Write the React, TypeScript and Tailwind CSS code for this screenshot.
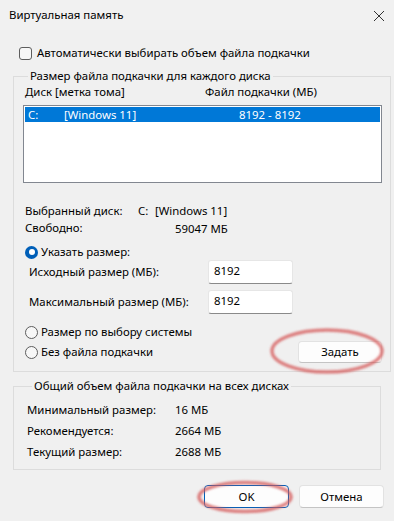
import React from "react";

function Radio({ checked }: { checked?: boolean }) {
  if (checked) {
    return (
      <span className="w-[13px] h-[13px] rounded-full bg-[#005fb8] flex items-center justify-center shrink-0">
        <span className="w-[6px] h-[6px] rounded-full bg-white" />
      </span>
    );
  }
  return <span className="w-[13px] h-[13px] rounded-full border border-[#5d5d5d] bg-[#f7f7f7] shrink-0" />;
}

function Input({ value }: { value: string }) {
  return (
    <div className="w-[85px] h-[24px] bg-white border border-[#e6e6e6] border-b-[#8a8a8a] rounded-[3px] pl-[5px] pt-[2px] leading-[16px]">
      {value}
    </div>
  );
}

export default function App() {
  return (
    <div
      className="relative w-[394px] h-[521px] bg-[#f0f0f0] text-[11.4px] leading-[16px] text-black overflow-hidden"
      style={{ fontFamily: '"Noto Sans", "Open Sans", sans-serif' }}
    >
      {/* title bar */}
      <div className="h-[30px] flex items-center justify-between pl-[9px] pr-[9px] bg-[#f1f1f1]">
        <span>Виртуальная память</span>
        <svg width="12" height="12" viewBox="0 0 12 12" className="mt-[1px]">
          <path d="M1 1 L11 11 M11 1 L1 11" stroke="#333" strokeWidth="1" />
        </svg>
      </div>

      <div className="px-[13px]">
        {/* auto checkbox */}
        <div className="mt-[15px] h-[16px] flex items-center pl-[6px] gap-[5px]">
          <span className="w-[13px] h-[13px] rounded-[3px] border border-[#5d5d5d] bg-[#f7f7f7]" />
          <span>Автоматически выбирать объем файла подкачки</span>
        </div>

        {/* group 1 */}
        <fieldset className="mt-[7px] border border-[#dcdcdc] pb-[8px] pl-[9px] pr-[8px] m-0">
          <legend className="ml-[5px] px-[2px] leading-[16px]">Размер файла подкачки для каждого диска</legend>
          <div className="flex h-[16px] pl-[2px]">
            <span className="w-[180px]">Диск [метка тома]</span>
            <span>Файл подкачки (МБ)</span>
          </div>
          <div className="mt-[5px] w-[359px] h-[78px] bg-white border border-[#828790] p-[1px]">
            <div className="h-[15px] bg-[#0078d7] text-white flex leading-[15px]">
              <span className="w-[39px] pl-[3px]">C:</span>
              <span className="w-[175px]">[Windows 11]</span>
              <span>8192 - 8192</span>
            </div>
          </div>

          <div className="mt-[20px] flex h-[16px] pl-[2px]">
            <span className="w-[113px]">Выбранный диск:</span>
            <span className="w-[17px]">C:</span>
            <span>[Windows 11]</span>
          </div>
          <div className="flex h-[16px] pl-[2px] mt-[1px]">
            <span className="w-[150px]">Свободно:</span>
            <span className="mt-[1px]">59047 МБ</span>
          </div>

          <div className="mt-[8px] flex items-center h-[16px] pl-[2px] gap-[3px]">
            <Radio checked />
            <span>Указать размер:</span>
          </div>
          <div className="flex items-center h-[24px] pl-[6px]">
            <span className="w-[179px]">Исходный размер (МБ):</span>
            <Input value="8192" />
          </div>
          <div className="mt-[6px] flex items-center h-[24px] pl-[6px]">
            <span className="w-[179px]">Максимальный размер (МБ):</span>
            <Input value="8192" />
          </div>

          <div className="mt-[10px] flex items-center h-[16px] pl-[2px] gap-[3px]">
            <Radio />
            <span>Размер по выбору системы</span>
          </div>
          <div className="mt-[1px] flex items-center justify-between h-[22px] pl-[2px]">
            <div className="flex items-center gap-[3px]">
              <Radio />
              <span>Без файла подкачки</span>
            </div>
            <button className="w-[84px] h-[22px] bg-[#fdfdfd] border border-[#e2e2e2] border-b-[#c4c4c4] rounded-[4px] leading-[16px]">
              Задать
            </button>
          </div>
        </fieldset>

        {/* group 2 */}
        <fieldset className="mt-[6px] border border-[#dcdcdc] pb-[7px] pl-[13px] m-0">
          <legend className="ml-[5px] px-[2px] leading-[16px]">Общий объем файла подкачки на всех дисках</legend>
          <div className="mt-[5px] flex h-[21px] items-center">
            <span className="w-[148px]">Минимальный размер:</span>
            <span>16 МБ</span>
          </div>
          <div className="flex h-[21px] items-center">
            <span className="w-[148px]">Рекомендуется:</span>
            <span>2664 МБ</span>
          </div>
          <div className="flex h-[21px] items-center">
            <span className="w-[148px]">Текущий размер:</span>
            <span>2688 МБ</span>
          </div>
        </fieldset>
      </div>

      {/* buttons */}
      <div className="mt-[15px] flex justify-end gap-[10px] pr-[10px]">
        <button className="w-[85px] h-[23px] bg-[#fdfdfd] border border-[#005fb8] rounded-[4px] leading-[16px]">
          OK
        </button>
        <button className="w-[85px] h-[23px] bg-[#fdfdfd] border border-[#e2e2e2] border-b-[#c4c4c4] rounded-[4px] leading-[16px]">
          Отмена
        </button>
      </div>

      {/* red annotation ellipses */}
      <svg className="absolute left-0 top-0 pointer-events-none" width="394" height="521">
        <defs>
          <filter id="soft" x="-20%" y="-20%" width="140%" height="140%">
            <feGaussianBlur stdDeviation="1.2" />
          </filter>
        </defs>
        <g filter="url(#soft)" fill="none" stroke="rgba(214,90,90,0.75)" strokeWidth="3.5">
          <ellipse cx="327" cy="351" rx="55" ry="21" />
          <ellipse cx="245" cy="497" rx="46" ry="14.5" />
        </g>
      </svg>
    </div>
  );
}
